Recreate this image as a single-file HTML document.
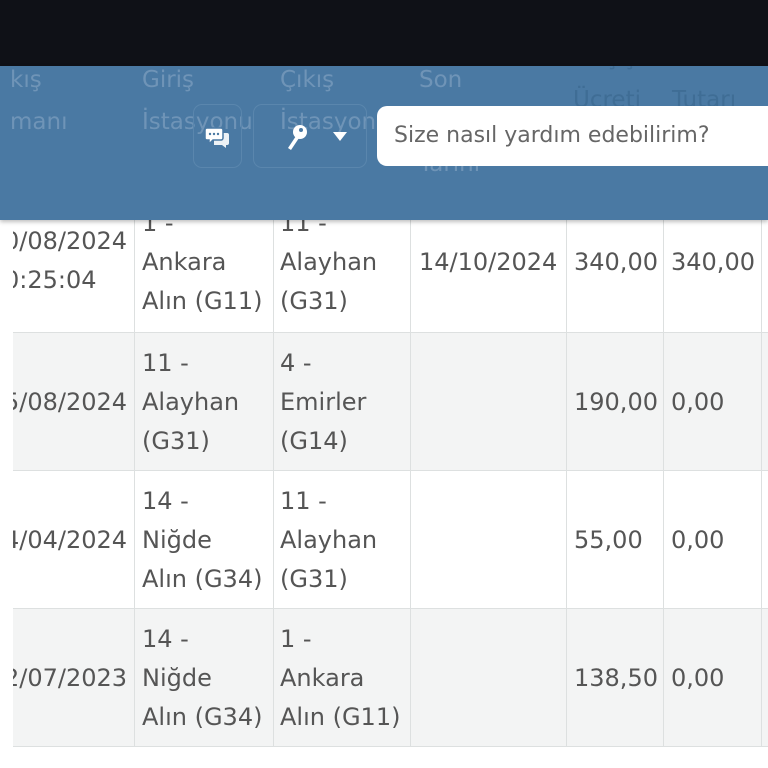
<!DOCTYPE html>
<html><head><meta charset="utf-8"><style>
*{margin:0;padding:0;box-sizing:border-box}
body{width:768px;height:768px;overflow:hidden;background:#fff;font-family:"DejaVu Sans","Liberation Sans",sans-serif;position:relative;color:#555}
.t{position:absolute;font-size:24px;line-height:39px;color:#555;white-space:nowrap}
.row{position:absolute;left:13px;width:760px;border-bottom:1px solid #dde0e0}
.vl{position:absolute;top:194px;height:553px;width:1px;background:#dde0e0}
#top{position:absolute;left:0;top:0;width:768px;height:66px;background:#0f1117}
#hdr{position:absolute;left:0;top:66px;width:768px;height:154px;background:#4a79a3;box-shadow:0 2px 4px rgba(0,0,0,.25);overflow:hidden}
.g{position:absolute;font-size:23px;line-height:42px;color:#6f94b7;white-space:nowrap}
.gd{color:#3f6d95}
.btn{position:absolute;top:38px;height:64px;border:1px solid #5a86ad;border-radius:9px}
#search{position:absolute;left:377px;top:40px;width:400px;height:60px;background:#fff;border-radius:10px;font-size:22px;line-height:60px;padding-left:17px;color:#666}
#lm{position:absolute;left:0;top:194px;width:13px;height:560px;background:#fff}
</style></head><body>
<div class="row" style="top:194px;height:139px;background:#fff"></div>
<div class="row" style="top:333px;height:138px;background:#f3f4f4"></div>
<div class="row" style="top:471px;height:138px;background:#fff"></div>
<div class="row" style="top:609px;height:138px;background:#f3f4f4"></div>
<div class="vl" style="left:134px"></div>
<div class="vl" style="left:273px"></div>
<div class="vl" style="left:410px"></div>
<div class="vl" style="left:566px"></div>
<div class="vl" style="left:663px"></div>
<div class="vl" style="left:761px"></div>

<div class="t" style="left:4px;top:222px">0/08/2024<br>0:25:04</div>
<div class="t" style="left:142px;top:204px">1 -<br>Ankara<br>Alın (G11)</div>
<div class="t" style="left:280px;top:204px">11 -<br>Alayhan<br>(G31)</div>
<div class="t" style="left:419px;top:243px">14/10/2024</div>
<div class="t" style="left:574px;top:243px">340,00</div>
<div class="t" style="left:671px;top:243px">340,00</div>

<div class="t" style="left:4px;top:383px">5/08/2024</div>
<div class="t" style="left:142px;top:344px">11 -<br>Alayhan<br>(G31)</div>
<div class="t" style="left:280px;top:344px">4 -<br>Emirler<br>(G14)</div>
<div class="t" style="left:574px;top:383px">190,00</div>
<div class="t" style="left:671px;top:383px">0,00</div>

<div class="t" style="left:4px;top:521px">4/04/2024</div>
<div class="t" style="left:142px;top:482px">14 -<br>Niğde<br>Alın (G34)</div>
<div class="t" style="left:280px;top:482px">11 -<br>Alayhan<br>(G31)</div>
<div class="t" style="left:574px;top:521px">55,00</div>
<div class="t" style="left:671px;top:521px">0,00</div>

<div class="t" style="left:4px;top:659px">2/07/2023</div>
<div class="t" style="left:142px;top:620px">14 -<br>Niğde<br>Alın (G34)</div>
<div class="t" style="left:280px;top:620px">1 -<br>Ankara<br>Alın (G11)</div>
<div class="t" style="left:574px;top:659px">138,50</div>
<div class="t" style="left:671px;top:659px">0,00</div>
<div id="lm"></div>

<div id="top"></div>
<div id="hdr">
<div class="g" style="left:10px;top:-7px">kış<br>manı</div>
<div class="g" style="left:142px;top:-7px">Giriş<br>İstasyonu</div>
<div class="g" style="left:280px;top:-7px">Çıkış<br>İstasyonu</div>
<div class="g" style="left:419px;top:-7px">Son<br><br>Tarihi</div>
<div class="g gd" style="left:573px;top:-29px">Geçiş<br>Ücreti</div>
<div class="g gd" style="left:672px;top:-29px">Ceza<br>Tutarı</div>
<div class="btn" style="left:193px;width:49px"></div>
<div class="btn" style="left:253px;width:114px"></div>
<svg style="position:absolute;left:205px;top:61px" width="26" height="22" viewBox="0 0 26 22">
<path d="M9 6h13a2 2 0 0 1 2 2v8a2 2 0 0 1-2 2h-1v3l-4-3H9z" fill="#fff" opacity=".9"/>
<path d="M2 1h14a2 2 0 0 1 2 2v8a2 2 0 0 1-2 2H8l-4 4v-4H2a2 2 0 0 1-2-2V3a2 2 0 0 1 2-2z" fill="#fff" stroke="#4a79a3" stroke-width="1.5"/>
<circle cx="5" cy="7" r="1.2" fill="#4a79a3"/><circle cx="9" cy="7" r="1.2" fill="#4a79a3"/><circle cx="13" cy="7" r="1.2" fill="#4a79a3"/>
</svg>
<svg style="position:absolute;left:285px;top:58px" width="24" height="28" viewBox="0 0 24 28">
<circle cx="15" cy="8" r="7" fill="#fff"/><circle cx="16" cy="6" r="2" fill="#4a79a3"/>
<path d="M11 12L3 24l3 2 8-12z" fill="#fff"/>
</svg>
<svg style="position:absolute;left:333px;top:66px" width="14" height="9" viewBox="0 0 14 9"><path d="M0 0h14L7 9z" fill="#fff"/></svg>
<div id="search">Size nasıl yardım edebilirim?</div>
</div>
</body></html>
